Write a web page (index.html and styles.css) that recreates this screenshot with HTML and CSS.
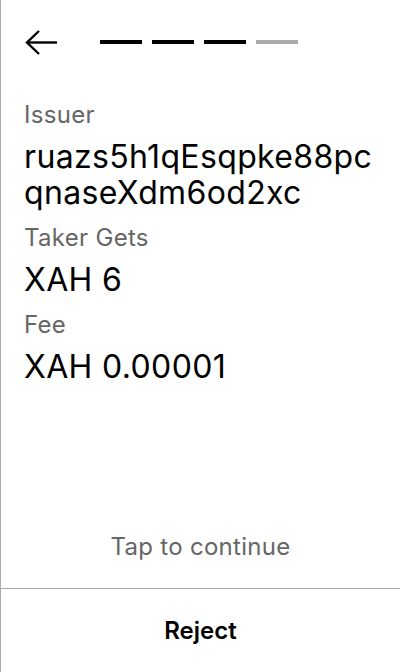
FILE: index.html
```html
<!DOCTYPE html>
<html>
<head>
<meta charset="utf-8">
<link rel="stylesheet" href="styles.css">
</head>
<body>
<div class="screen">
  <header class="header">
    <button class="back" aria-label="Back">
      <svg width="34" height="28" viewBox="0 0 34 28" fill="none" stroke="#000" stroke-width="2.4">
        <path d="M33 13.5H3"/>
        <path d="M15 2L3 13.5L15 25"/>
      </svg>
    </button>
    <div class="steps">
      <span class="step done"></span>
      <span class="step done"></span>
      <span class="step done"></span>
      <span class="step"></span>
    </div>
  </header>
  <main class="details">
    <div class="label">Issuer</div>
    <div class="value">ruazs5h1qEsqpke88pc<br>qnaseXdm6od2xc</div>
    <div class="label">Taker Gets</div>
    <div class="value">XAH 6</div>
    <div class="label">Fee</div>
    <div class="value">XAH 0.00001</div>
  </main>
  <div class="tap">Tap to continue</div>
  <button class="reject">Reject</button>
</div>
</body>
</html>
```

FILE: styles.css
```css
html, body {
  margin: 0;
  padding: 0;
  background: #fff;
}
body {
  font-family: Inter, "Noto Sans", sans-serif;
  color: #000;
}
.screen {
  box-sizing: border-box;
  width: 400px;
  height: 672px;
  border-left: 1px solid #aaa;
  display: flex;
  flex-direction: column;
}
.header {
  display: flex;
  align-items: center;
  padding: 29px 0 0 23px;
  height: 28px;
}
.back {
  border: 0;
  background: none;
  padding: 0;
  margin: 0;
  width: 34px;
  height: 28px;
  display: block;
}
.back svg { display: block; }
.steps {
  display: flex;
  gap: 10px;
  margin-left: 42px;
  margin-top: -3px;
}
.step {
  width: 42px;
  height: 4px;
  background: #aaa;
}
.step.done { background: #000; }
.details {
  padding: 44px 24px 0 23px;
  flex: 1;
}
.label {
  font-size: 24px;
  line-height: 28px;
  color: #666;
  letter-spacing: 0.3px;
  margin-bottom: 10px;
}
.value {
  font-size: 32px;
  line-height: 36px;
  letter-spacing: 0.35px;
  margin-bottom: 13px;
}
.tap {
  text-align: center;
  font-size: 24px;
  line-height: 28px;
  color: #666;
  letter-spacing: 0.3px;
  padding-bottom: 27px;
}
.reject {
  border: 0;
  border-top: 1px solid #aaa;
  background: none;
  height: 84px;
  margin: 0;
  padding: 0;
  font-family: Inter, "Noto Sans", sans-serif;
  font-size: 24px;
  font-weight: 600;
  color: #000;
}
```
